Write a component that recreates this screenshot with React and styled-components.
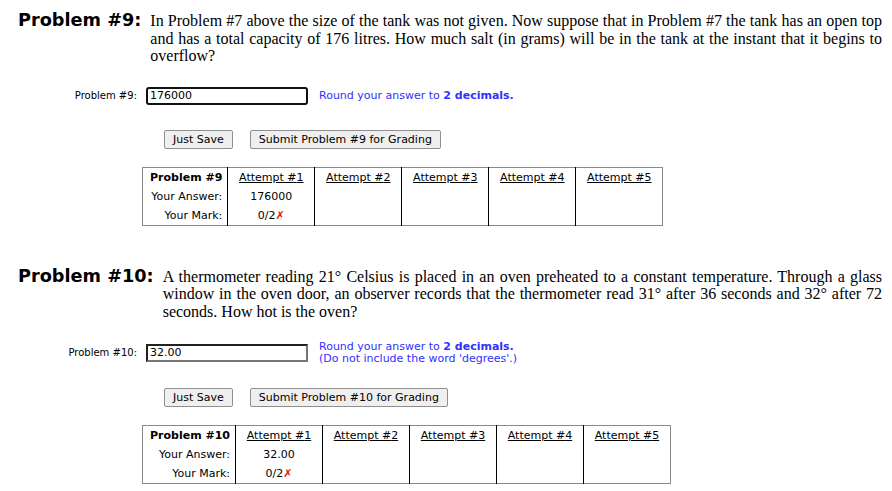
import React from "react";
import styled, { createGlobalStyle } from "styled-components";

const problems = [
  {
    num: 9,
    text: "In Problem #7 above the size of the tank was not given. Now suppose that in Problem #7 the tank has an open top and has a total capacity of 176 litres. How much salt (in grams) will be in the tank at the instant that it begins to overflow?",
    answer: "176000",
    focused: true,
    extraHint: null,
  },
  {
    num: 10,
    text: "A thermometer reading 21° Celsius is placed in an oven preheated to a constant temperature. Through a glass window in the oven door, an observer records that the thermometer read 31° after 36 seconds and 32° after 72 seconds. How hot is the oven?",
    answer: "32.00",
    focused: false,
    extraHint: "(Do not include the word 'degrees'.)",
  },
];

function App() {
  return (
    <Page>
      <GlobalStyle />
      {problems.map((p, index) => (
        <Section key={p.num} first={index === 0}>
          <Statement>
            <Heading>Problem #{p.num}:</Heading>
            <Question>{p.text}</Question>
          </Statement>
          <AnswerRow>
            <Label>Problem #{p.num}:</Label>
            <AnswerInput defaultValue={p.answer} focused={p.focused} />
            <Hint>
              <div>
                Round your answer to <b>2 decimals.</b>
              </div>
              {p.extraHint && <div>{p.extraHint}</div>}
            </Hint>
          </AnswerRow>
          <Buttons>
            <Button>Just Save</Button>
            <Button>Submit Problem #{p.num} for Grading</Button>
          </Buttons>
          <Attempts>
            <tbody>
              <tr>
                <RowHead bold>Problem #{p.num}</RowHead>
                {[1, 2, 3, 4, 5].map((n) => (
                  <Cell key={n} last={n === 5}>
                    <AttemptLink>Attempt #{n}</AttemptLink>
                  </Cell>
                ))}
              </tr>
              <tr>
                <RowHead>Your Answer:</RowHead>
                <Cell>{p.answer}</Cell>
                <Cell />
                <Cell />
                <Cell />
                <Cell last />
              </tr>
              <tr>
                <RowHead>Your Mark:</RowHead>
                <Cell>
                  0/2<Wrong>✗</Wrong>
                </Cell>
                <Cell />
                <Cell />
                <Cell />
                <Cell last />
              </tr>
            </tbody>
          </Attempts>
        </Section>
      ))}
    </Page>
  );
}

const GlobalStyle = createGlobalStyle`
  body {
    margin: 8px;
    background: #fff;
    color: #000;
  }
`;

const Page = styled.div`
  padding-top: 4px;
  font-family: "DejaVu Sans", Verdana, sans-serif;
`;

const Section = styled.div`
  margin-top: ${(props) => (props.first ? "0" : "42px")};
`;

const Statement = styled.div`
  display: flex;
  align-items: baseline;
  padding-left: 10px;
  padding-right: 2px;
`;

const Heading = styled.div`
  font-family: "DejaVu Sans", Verdana, sans-serif;
  font-weight: bold;
  font-size: 17.7px;
  line-height: 17.6px;
  white-space: nowrap;
  margin-right: 9px;
`;

const Question = styled.div`
  font-family: "Liberation Serif", "Times New Roman", serif;
  font-size: 16px;
  line-height: 17.6px;
  text-align: justify;
`;

const AnswerRow = styled.div`
  display: flex;
  align-items: center;
  min-height: 22px;
  margin-top: 20px;
`;

const Label = styled.div`
  width: 129px;
  padding-right: 9px;
  text-align: right;
  font-size: 10px;
`;

const AnswerInput = styled.input`
  box-sizing: border-box;
  width: 162px;
  height: 18px;
  padding: 0 2px;
  font-family: "DejaVu Sans", Verdana, sans-serif;
  font-size: 11px;
  color: #000;
  background: #fff;
  border: ${(props) => (props.focused ? "2px solid #111" : "2px inset #767676")};
  border-radius: ${(props) => (props.focused ? "3px" : "0")};
  outline: none;
`;

const Hint = styled.div`
  margin-left: 11px;
  font-size: 11px;
  line-height: 12px;
  color: #3030ff;
`;

const Buttons = styled.div`
  display: flex;
  gap: 17px;
  margin-top: 23px;
  margin-left: 156px;
`;

const Button = styled.button`
  height: 19px;
  padding: 0 8px;
  font-family: "DejaVu Sans", Verdana, sans-serif;
  font-size: 11px;
  color: #000;
  background: #efefef;
  border: 1px solid #8f8f8f;
  border-radius: 2px;
`;

const Attempts = styled.table`
  margin-top: 18px;
  margin-left: 134px;
  border-collapse: collapse;
  border: 1px solid #8a8a8a;
  font-size: 11px;
`;

const RowHead = styled.td`
  height: 19px;
  padding: 0 5px 0 7px;
  text-align: right;
  white-space: nowrap;
  font-weight: ${(props) => (props.bold ? "bold" : "normal")};
  border-right: 1px solid #000;
`;

const Cell = styled.td`
  width: 78px;
  height: 19px;
  padding: 0 4px;
  text-align: center;
  vertical-align: middle;
  border-right: ${(props) => (props.last ? "none" : "1px solid #000")};
`;

const AttemptLink = styled.span`
  color: #000;
  text-decoration: underline;
`;

const Wrong = styled.span`
  color: #ff0000;
`;

export default App;
